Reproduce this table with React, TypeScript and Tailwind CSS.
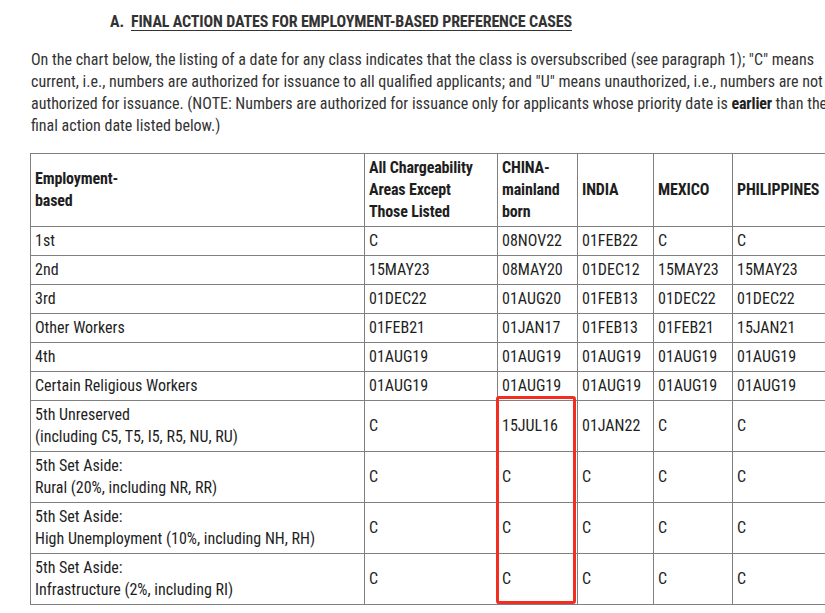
const rows: { label: React.ReactNode; cells: string[] }[] = [
  { label: "1st", cells: ["C", "08NOV22", "01FEB22", "C", "C"] },
  { label: "2nd", cells: ["15MAY23", "08MAY20", "01DEC12", "15MAY23", "15MAY23"] },
  { label: "3rd", cells: ["01DEC22", "01AUG20", "01FEB13", "01DEC22", "01DEC22"] },
  { label: "Other Workers", cells: ["01FEB21", "01JAN17", "01FEB13", "01FEB21", "15JAN21"] },
  { label: "4th", cells: ["01AUG19", "01AUG19", "01AUG19", "01AUG19", "01AUG19"] },
  { label: "Certain Religious Workers", cells: ["01AUG19", "01AUG19", "01AUG19", "01AUG19", "01AUG19"] },
  {
    label: (
      <>
        5th Unreserved
        <br />
        (including C5, T5, I5, R5, NU, RU)
      </>
    ),
    cells: ["C", "15JUL16", "01JAN22", "C", "C"],
  },
  {
    label: (
      <>
        5th Set Aside:
        <br />
        Rural (20%, including NR, RR)
      </>
    ),
    cells: ["C", "C", "C", "C", "C"],
  },
  {
    label: (
      <>
        5th Set Aside:
        <br />
        High Unemployment (10%, including NH, RH)
      </>
    ),
    cells: ["C", "C", "C", "C", "C"],
  },
  {
    label: (
      <>
        5th Set Aside:
        <br />
        Infrastructure (2%, including RI)
      </>
    ),
    cells: ["C", "C", "C", "C", "C"],
  },
];

const th = "border border-[#808080] px-1 py-[3px] text-left align-middle font-bold tracking-[-0.15px] text-[#1e1e1e]";
const td = "border border-[#808080] px-1 py-[3px] text-left align-middle font-normal text-[#1e1e1e]";

export default function App() {
  return (
    <div className="w-full h-[613px] overflow-hidden bg-white font-['Roboto'] font-stretch-condensed text-[16px] leading-[22px] text-[#333]">
      <h2 className="pt-[11px] pl-[110px] font-bold tracking-[-0.15px] text-[#333] whitespace-nowrap">
        A.&nbsp; <span className="underline underline-offset-[3px]">FINAL ACTION DATES FOR EMPLOYMENT-BASED PREFERENCE CASES</span>
      </h2>

      <p className="mt-4 pl-[31px] whitespace-nowrap">
        On the chart below, the listing of a date for any class indicates that the class is oversubscribed (see paragraph 1); "C" means
        <br />
        current, i.e., numbers are authorized for issuance to all qualified applicants; and "U" means unauthorized, i.e., numbers are not
        <br />
        authorized for issuance. (NOTE: Numbers are authorized for issuance only for applicants whose priority date is{" "}
        <b className="font-bold tracking-[-0.15px] text-[#222]">earlier</b> than the
        <br />
        final action date listed below.)
      </p>

      <div className="relative mt-4 ml-[30px] w-[803px]">
        <table className="table-fixed border-collapse w-[803px]">
          <colgroup>
            <col className="w-[334px]" />
            <col className="w-[133px]" />
            <col className="w-[80px]" />
            <col className="w-[76px]" />
            <col className="w-[79px]" />
            <col className="w-[101px]" />
          </colgroup>
          <thead>
            <tr>
              <th className={th}>
                Employment-
                <br />
                based
              </th>
              <th className={th}>
                All Chargeability
                <br />
                Areas Except
                <br />
                Those Listed
              </th>
              <th className={th}>
                CHINA-
                <br />
                mainland
                <br />
                born
              </th>
              <th className={th}>INDIA</th>
              <th className={th}>MEXICO</th>
              <th className={th}>PHILIPPINES</th>
            </tr>
          </thead>
          <tbody>
            {rows.map((r, i) => (
              <tr key={i}>
                <td className={td}>{r.label}</td>
                {r.cells.map((c, j) => (
                  <td key={j} className={`${td} whitespace-nowrap`}>
                    {c}
                  </td>
                ))}
              </tr>
            ))}
          </tbody>
        </table>

        {/* red highlight box */}
        <div className="absolute left-[466px] top-[243px] w-[80px] h-[208px] border-[3px] border-[#f42d21] rounded-[3px] pointer-events-none" />
      </div>
    </div>
  );
}
